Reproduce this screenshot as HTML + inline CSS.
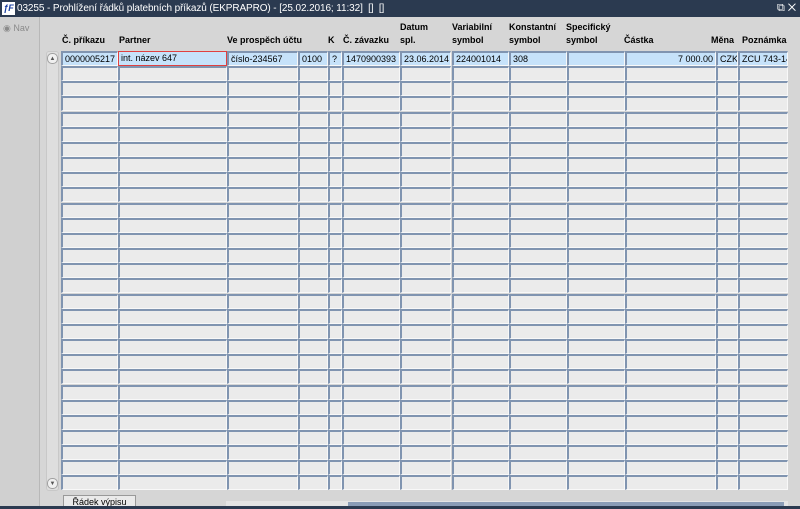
<!DOCTYPE html><html><head><meta charset="utf-8"><style>
*{margin:0;padding:0;box-sizing:border-box}
body{width:800px;height:509px;overflow:hidden;background:#d6d6d6;font-family:"Liberation Sans",sans-serif;font-size:9px;position:relative;color:#000}
.t{position:absolute;left:0;top:0;width:800px;height:17px;background:#2b3a50;color:#fff;font-size:10px;line-height:17px;padding-left:17px;letter-spacing:-0.1px}
.logo{position:absolute;left:2px;top:2px;width:13px;height:13px;background:#fff;color:#1a3fa0;font-weight:bold;font-style:italic;font-size:9px;line-height:13px;text-align:center}
.left{position:absolute;left:0;top:17px;width:40px;height:490px;background:#d0d0d0;border-right:1px solid #b8b8b8}
.nav{position:absolute;left:3px;top:6px;color:#8a8a8a;font-size:9px}
.c{position:absolute;height:15px;background:#ebebeb;border-top:2px solid #8094b0;border-left:2px solid #8094b0;border-right:1px solid #f8f8f8;border-bottom:1px solid #f8f8f8;font-size:9px;line-height:12px;padding-left:2px;white-space:nowrap;overflow:hidden}
.s{background:#c6e2fa}
.h{position:absolute;font-weight:bold;font-size:9px;line-height:13px}
.vs{position:absolute;left:46px;top:51px;width:13px;height:440px;background:#dedede;border:1px solid #c8c8c8;border-radius:3px}
.btn{position:absolute;left:0;width:11px;height:11px;border:1px solid #a0a0a0;border-radius:5px;background:#f0f0f0;font-size:6px;text-align:center;line-height:10px;color:#555}
.bot{position:absolute;left:0;top:506px;width:800px;height:3px;background:#2b3a50}
</style></head><body>
<div class="t"><div class="logo">ƒF</div>03255 - Prohlížení řádků platebních příkazů (EKPRAPRO) - [25.02.2016; 11:32] &nbsp;[] &nbsp;[]<span style="position:absolute;right:4px;top:0;font-size:11px">⧉ ✕</span></div>
<div class="left"><div class="nav">◉ Nav</div></div>
<div class="vs"><div class="btn" style="top:1px">▲</div><div class="btn" style="bottom:1px">▼</div></div>
<div class="h" style="left:62px;top:34px">Č. příkazu</div>
<div class="h" style="left:119px;top:34px">Partner</div>
<div class="h" style="left:227px;top:34px">Ve prospěch účtu</div>
<div class="h" style="left:328px;top:34px">K</div>
<div class="h" style="left:343px;top:34px">Č. závazku</div>
<div class="h" style="left:400px;top:21px">Datum<br>spl.</div>
<div class="h" style="left:452px;top:21px">Variabilní<br>symbol</div>
<div class="h" style="left:509px;top:21px">Konstantní<br>symbol</div>
<div class="h" style="left:566px;top:21px">Specifický<br>symbol</div>
<div class="h" style="left:624px;top:34px">Částka</div>
<div class="h" style="left:711px;top:34px">Měna</div>
<div class="h" style="left:742px;top:34px">Poznámka</div>
<div id="g"></div>
<div style="position:absolute;left:63px;top:495px;width:73px;height:14px;background:#eaeaea;border:1px solid #999;border-bottom:none;font-size:9px;text-align:center;line-height:13px">Řádek výpisu</div>
<div style="position:absolute;left:226px;top:501px;width:562px;height:6px;background:#e4e4e4"><div style="position:absolute;left:122px;top:1px;width:436px;height:5px;background:#8a9cb6"></div></div>
<div class="bot"></div>
<script>
var cols=[[61,57],[118,109],[227,71],[298,30],[328,14],[342,58],[400,51],[452,57],[509,58],[567,58],[625,91],[716,22],[738,50]];
var d=["0000005217","int. název 647","číslo-234567","0100","?","1470900393","23.06.2014","224001014","308","","7 000.00","CZK","ZCU 743-147"];
var h="";
for(var r=0;r<29;r++){var y=Math.round(51+r*15.16);
for(var i=0;i<cols.length;i++){var c=cols[i];var st="left:"+c[0]+"px;top:"+y+"px;width:"+c[1]+"px;";
var cls="c"+(r==0?" s":"");var txt=r==0?d[i]:"";
if(r==0&&i==1)st+="border:1px solid #e04040;background:#c6e2fa;";
if(r==0&&i==10)st+="text-align:right;padding-right:2px;";
h+='<div class="'+cls+'" style="'+st+'">'+txt+'</div>';}}
document.getElementById("g").innerHTML=h;
</script>
</body></html>
